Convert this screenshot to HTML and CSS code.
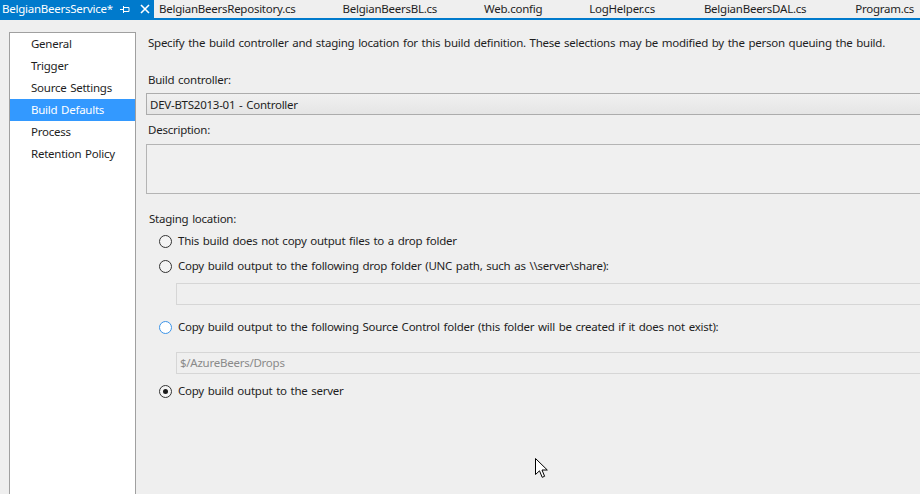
FILE: index.html
```html
<!DOCTYPE html>
<html>
<head>
<meta charset="utf-8">
<link rel="stylesheet" href="styles.css">
</head>
<body>
<div class="tabbar">
  <div class="tab active">
    <span class="tab-title">BelgianBeersService*</span>
    <svg class="pin" width="10" height="9" viewBox="0 0 10 9"><path d="M0 4.5H3M3.5 1V8M4 2.5H9V6.5H4" fill="none" stroke="#fff" stroke-width="1"/></svg>
    <svg class="close" width="10" height="10" viewBox="0 0 10 10"><path d="M1 1L9 9M9 1L1 9" stroke="#fff" stroke-width="1.6"/></svg>
  </div>
  <div class="tab">BelgianBeersRepository.cs</div>
  <div class="tab">BelgianBeersBL.cs</div>
  <div class="tab">Web.config</div>
  <div class="tab">LogHelper.cs</div>
  <div class="tab">BelgianBeersDAL.cs</div>
  <div class="tab">Program.cs</div>
</div>
<div class="tab-line"></div>
<div class="main">
  <nav class="sidebar">
    <div class="nav-item">General</div>
    <div class="nav-item">Trigger</div>
    <div class="nav-item">Source Settings</div>
    <div class="nav-item selected">Build Defaults</div>
    <div class="nav-item">Process</div>
    <div class="nav-item">Retention Policy</div>
  </nav>
  <section class="content">
    <p class="intro">Specify the build controller and staging location for this build definition. These selections may be modified by the person queuing the build.</p>
    <div class="label label-controller">Build controller:</div>
    <div class="combo">DEV-BTS2013-01 - Controller</div>
    <div class="label label-desc">Description:</div>
    <div class="desc-box"></div>
    <div class="label label-staging">Staging location:</div>
    <div class="radio-row row1"><span class="radio"></span><span>This build does not copy output files to a drop folder</span></div>
    <div class="radio-row row2"><span class="radio"></span><span>Copy build output to the following drop folder (UNC path, such as \\server\share):</span></div>
    <div class="path-box box1"></div>
    <div class="radio-row row3"><span class="radio hover"></span><span>Copy build output to the following Source Control folder (this folder will be created if it does not exist):</span></div>
    <div class="path-box box2">$/AzureBeers/Drops</div>
    <div class="radio-row row4"><span class="radio checked"></span><span>Copy build output to the server</span></div>
  </section>
</div>
<svg class="cursor" width="13" height="21" viewBox="0 0 13 21"><path d="M0.5 0.5V16.5L4.5 12.8L7.2 19.3L9.6 18.3L7 12H12.3Z" fill="#fff" stroke="#000" stroke-width="1" stroke-linejoin="miter"/></svg>
</body>
</html>
```
FILE: styles.css
```css
html, body {
  margin: 0;
  padding: 0;
}
body {
  width: 920px;
  height: 494px;
  overflow: hidden;
  background: #efefef;
  font-family: "Noto Sans", "Open Sans", sans-serif;
  font-size: 11.5px;
  letter-spacing: -0.25px;
  word-spacing: 1px;
  color: #1e1e1e;
  position: relative;
}
.tabbar {
  display: flex;
  height: 18px;
  white-space: nowrap;
  overflow: hidden;
}
.tab {
  padding: 0 42px 0 5px;
  line-height: 18px;
  color: #1e1e1e;
  flex: none;
}
.tab:nth-child(n+5) {
  padding-right: 44px;
}
.tab.active {
  background: #007acc;
  color: #fff;
  padding: 0 4px 0 2px;
  display: flex;
  align-items: center;
}
.tab-title {
  width: 117px;
}
.pin {
  margin-left: 1px;
}
.close {
  margin-left: 10px;
}
.tab-line {
  height: 2px;
  background: #007acc;
}
.main {
  display: flex;
  height: 474px;
  overflow: hidden;
}
.sidebar {
  flex: none;
  width: 125px;
  margin: 12px 0 0 9px;
  background: #fff;
  border: 1px solid #a0a0a0;
  border-bottom: none;
  padding-top: 0;
}
.nav-item {
  height: 22px;
  line-height: 22px;
  padding-left: 21px;
  white-space: nowrap;
}
.nav-item.selected {
  background: #3399ff;
  color: #fff;
}
.content {
  flex: 1;
  min-width: 0;
  padding: 15px 0 0 10px;
  white-space: nowrap;
}
.intro {
  margin: 0 0 0 2px;
  line-height: 16px;
}
.label {
  line-height: 16px;
  margin-left: 2px;
}
.label-controller { margin-top: 21px; }
.label-desc { margin-top: 7px; }
.label-staging { margin-top: 17px; margin-left: 3px; }
.combo {
  margin-top: 5px;
  margin-right: -6px;
  height: 20px;
  line-height: 22px;
  padding-left: 3px;
  border: 1px solid #acacac;
  background: linear-gradient(#f0f0f0, #e5e5e5);
}
.desc-box {
  margin-top: 6px;
  margin-right: -6px;
  height: 48px;
  border: 1px solid #b4b4b4;
  background: #f0f0f0;
}
.radio-row {
  display: flex;
  align-items: center;
  height: 16px;
  line-height: 18px;
  padding-left: 13px;
  gap: 6px;
}
.row1 { margin-top: 6px; }
.row2 { margin-top: 9px; }
.row3 { margin-top: 14px; }
.row4 { margin-top: 9px; }
.radio {
  flex: none;
  box-sizing: border-box;
  width: 13px;
  height: 13px;
  border-radius: 50%;
  border: 1px solid #333;
  background: #f4f4f4;
  display: flex;
  align-items: center;
  justify-content: center;
}
.radio.hover {
  border-color: #3c94e8;
  background: #fff;
}
.radio.checked::after {
  content: "";
  width: 5px;
  height: 5px;
  border-radius: 50%;
  background: #1a1a1a;
}
.path-box {
  margin-left: 30px;
  margin-right: -6px;
  height: 20px;
  line-height: 20px;
  padding-left: 3px;
  border: 1px solid #d6d6d6;
  background: #efefef;
  color: #8a8a8a;
}
.box1 { margin-top: 9px; }
.box2 { margin-top: 17px; }
.cursor {
  position: absolute;
  left: 535px;
  top: 458px;
}
```
